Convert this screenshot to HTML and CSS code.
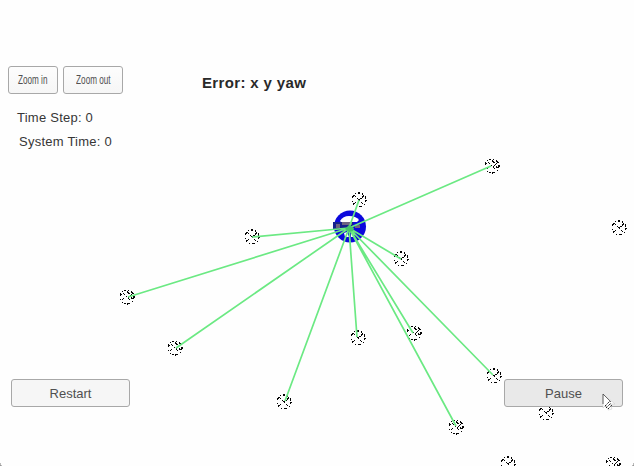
FILE: index.html
```html
<!DOCTYPE html>
<html lang="en">
<head>
<meta charset="utf-8">
<title>Landmark simulator</title>
<link rel="stylesheet" href="styles.css">
</head>
<body>
<main class="window">
  <svg class="scene" viewBox="0 0 634 466" width="634" height="466" aria-hidden="true">
    <defs>
      <g id="landmark" fill="none" stroke="#050505">
        <circle r="7" stroke-width="1.1" stroke-dasharray="2 2 1 3 3 2 1 2"/>
        <path d="M-5-5L0 0M5-5L0 1M-5 4l3-3M2 2l3 3" stroke-width="1.2" stroke-dasharray="3 1 1 1"/>
      </g>
      <g id="landmark-dense" fill="none" stroke="#050505">
        <circle r="7" stroke-width="1.2" stroke-dasharray="2 2 1 2.500 3 2 1 1.500"/>
        <path d="M-7-1l3-3M-4-4L4 4M-5 3l2-2M0-5l3 2 2 5M1 1l4-4" stroke-width="1.4" stroke-dasharray="3 1.500 1 1"/>
      </g>
    </defs>
    <g shape-rendering="crispEdges">
      <use href="#landmark" x="619" y="228"/>
      <use href="#landmark" x="546" y="413"/>
      <use href="#landmark" x="508" y="464"/>
      <use href="#landmark-dense" x="613" y="464"/>
      <use href="#landmark" x="359" y="200"/>
      <use href="#landmark-dense" x="492" y="166"/>
      <use href="#landmark" x="252" y="237"/>
      <use href="#landmark" x="401" y="259"/>
      <use href="#landmark-dense" x="127" y="297"/>
      <use href="#landmark-dense" x="175" y="348"/>
      <use href="#landmark" x="358" y="338"/>
      <use href="#landmark-dense" x="414" y="333"/>
      <use href="#landmark" x="284" y="402"/>
      <use href="#landmark" x="494" y="376"/>
      <use href="#landmark-dense" x="456" y="427"/>
    </g>
    <circle cx="350" cy="226.500" r="16" fill="#0c08dc"/>
    <path d="M340 221q3-5 9-5 7 0 10 4l-2 2h-16z" fill="#fff"/>
    <path d="M344 233l3-1 2 5h-4zM351 233l4 1-2 3h-2z" fill="#fff"/>
    <path d="M333 222h20v8h-20z" fill="#15208c"/>
    <path d="M336 224h4v4h-4zM342 222h10v3h-10zM355 225h5v3h-5z" fill="#6d6380"/>
    <path class="rays" d="M349 228L359 200M349 228L491 166M349 228L252 237M349 228L401 259M349 228L128 297M349 228L176 348M349 228L357 337M349 228L413 333M349 228L285 401M349 228L493 375M349 228L456 426"/>
    <path d="M349 225l5 3-1 3-4 1-4-3z" fill="#45c46a"/>
    <path d="M0 463v3h2M632 466h2v-3" stroke="#777" fill="none"/>
  </svg>
  <header class="top">
    <div class="zoom">
      <button class="button zoom-in"><span>Zoom in</span></button>
      <button class="button zoom-out"><span>Zoom out</span></button>
    </div>
    <h1 class="error">Error: x y yaw</h1>
  </header>
  <section class="status">
    <p class="step">Time Step: 0</p>
    <p class="time">System Time: 0</p>
  </section>
  <footer class="controls">
    <button class="button restart">Restart</button>
    <button class="button pause">Pause</button>
  </footer>
  <svg class="cursor" viewBox="0 0 14 18" width="14" height="18" aria-hidden="true">
    <path d="M1 1v14l3-3 2 5 4-1-2-5h5z" fill="#fff" stroke="#ccc" stroke-width=".6"/>
    <path d="M1 1v10M1 1l8 8" fill="none" stroke="#444" stroke-width=".8"/>
    <path d="M3 13l5-5M4 15l5-5M6 16l4-4" stroke="#222" stroke-dasharray="1.500 .7"/>
  </svg>
</main>
</body>
</html>
```
FILE: styles.css
```css
* {
  box-sizing: border-box;
}

body {
  margin: 0;
  background: #fefefe;
  color: #363636;
  font-family: "Liberation Sans", Arial, sans-serif;
}

.window {
  position: relative;
  display: flex;
  flex-direction: column;
  width: 634px;
  height: 466px;
  overflow: hidden;
}

.scene {
  position: absolute;
  inset: 0;
}

.rays {
  fill: none;
  stroke: #6be983;
  stroke-width: 1.7;
}

.top,
.status,
.controls {
  position: relative;
}

.top {
  display: flex;
  align-items: center;
  padding: 66px 8px 0;
  height: 94px;
}

.zoom {
  display: flex;
  gap: 5px;
  width: 194px;
}

.button {
  display: flex;
  align-items: center;
  justify-content: center;
  height: 28px;
  padding: 0;
  border: 1px solid #a8a8a8;
  border-radius: 3px;
  background: linear-gradient(#fdfdfd, #f6f6f6);
  color: #505050;
  font: 13px "Liberation Sans", Arial, sans-serif;
}

.zoom-in {
  width: 50px;
}

.zoom-out {
  width: 60px;
}

.zoom .button {
  font-size: 12px;
}

.zoom span {
  display: block;
  white-space: nowrap;
  transform: scaleX(0.68);
}

.error {
  margin: 5px 0 0;
  color: #292929;
  font-size: 15px;
  letter-spacing: 0.36px;
  line-height: 18px;
  white-space: nowrap;
}

.status {
  padding: 14px 17px 0;
  font-size: 13px;
  letter-spacing: 0.24px;
  line-height: 20px;
}

.status p {
  margin: 0 0 4px;
}

.status .time {
  padding-left: 2px;
}

.controls {
  display: flex;
  justify-content: space-between;
  margin-top: auto;
  padding: 0 11px 59px 11px;
}

.restart,
.pause {
  width: 119px;
}

.restart {
  background: #f6f6f6;
}

.pause {
  background: #e9e9e9;
}

.cursor {
  position: absolute;
  left: 602px;
  top: 393px;
}
```
